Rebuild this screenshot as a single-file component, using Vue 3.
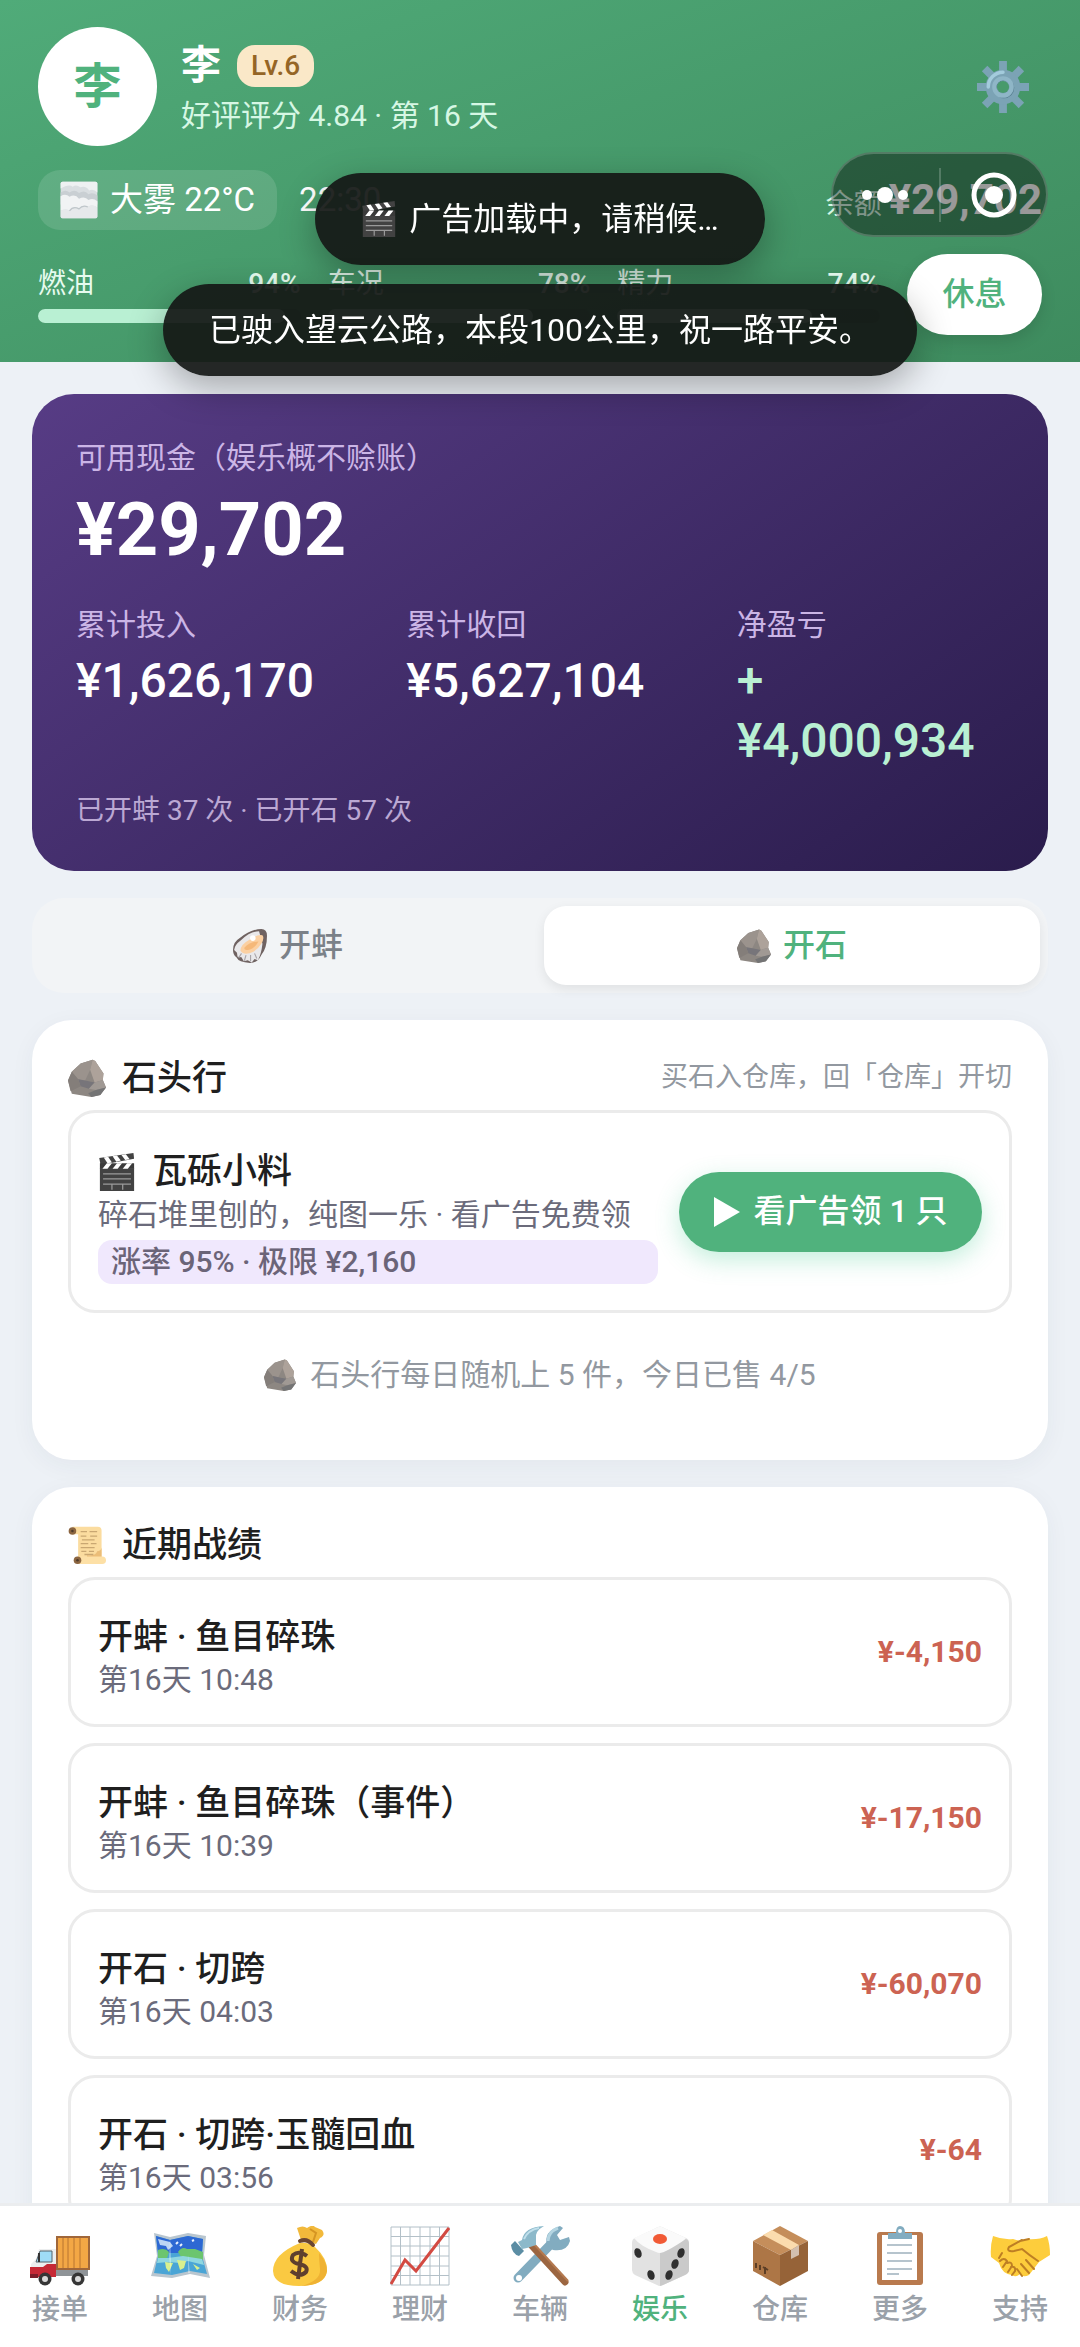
<template>
  <div class="app">
    <!-- icon sprite -->
    <svg class="sprite" aria-hidden="true">
      <symbol id="fog" viewBox="0 0 60 60">
        <rect x="1" y="1" width="58" height="58" rx="3" fill="#d9dee1" />
        <path d="M1 4q0-3 3-3h52q3 0 3 3v14q-6-6-13-3-5-8-14-5-6-5-12-1-6-5-19 3z" fill="#eef1f2" />
        <path d="M1 18q8-5 14 0 8-6 15 1 9-6 15 2 7-4 14 2v14H1z" fill="#c9cfd3" />
        <path d="M1 24q8-5 14 1 9-5 15 3 9-5 15 2 7-4 14 2v10q-8-6-15-1-9-4-14 3-9-5-15 3-6-4-14 0z" fill="#f1f3f4" />
        <path d="M1 47q8-4 14 0 6-8 15-3 6-7 14-3 8-5 15 1v14q0 3-3 3H4q-3 0-3-3z" fill="#e6e9eb" />
        <path d="M15 47q6-8 15-3 6-7 14-3" fill="none" stroke="#bfc6ca" stroke-width="2" />
      </symbol>
      <symbol id="clapper" viewBox="0 0 60 60">
        <rect x="3" y="24" width="54" height="36" fill="#424242" />
        <path d="M2 8 56 0l1 9L4 19z" fill="#424242" />
        <path d="m9 7 7-1 6 9-7 1zM23 5l7-1 6 8-7 2zM37 3l7-1 6 8-7 1z" fill="#fff" />
        <path d="M3 16h54v9H3z" fill="#3a3a3a" />
        <path d="m14 16-7 9h8l7-9zm16 0-7 9h8l7-9zm16 0-7 9h8l7-9z" fill="#fff" />
        <path d="M8 33h44M8 41h44M8 49h44M22 49v9M39 49v9" stroke="#9a9a9a" stroke-width="2" />
      </symbol>
      <symbol id="gear" viewBox="0 0 60 60">
        <g fill="#7ba3b5">
          <path d="M25.5 0h9v60h-9z" />
          <path d="M25.5 0h9v60h-9z" transform="rotate(45 30 30)" />
          <path d="M25.5 0h9v60h-9z" transform="rotate(90 30 30)" />
          <path d="M25.5 0h9v60h-9z" transform="rotate(135 30 30)" />
          <circle cx="30" cy="30" r="20" />
        </g>
        <path d="M13 30a17 17 0 0 1 17-17" fill="none" stroke="#a3cbdc" stroke-width="4" stroke-linecap="round" />
        <circle cx="31" cy="31" r="10" fill="none" stroke="#547b8c" stroke-width="4" />
        <circle cx="30" cy="30" r="10" fill="none" stroke="#8fb6c7" stroke-width="5" />
        <circle cx="30" cy="30" r="7" fill="#489a6b" />
      </symbol>
      <symbol id="oyster" viewBox="0 0 60 60">
        <path d="M0 37Q0 23 12 16 32 0 50 0q10 0 10 12 0 22-10 34-6 14-20 14-20-1-24-10-6-4-6-13z" fill="#6f6261" />
        <path d="M2 37q1-9 12-17Q30 4 46 4l6 22q-2 18-8 29l-6-2-5 6-7-4-7 2-4-7-7-1-1-7z" fill="#e9e8ea" />
        <path d="M13 38Q14 27 29 19 43 9 52 11q4 5-2 15-8 13-21 17-11 3-16-5z" fill="#fbd0a2" />
        <path d="M20 33q10-11 25-11-7 13-19 15-7 1-6-4z" fill="#f5b879" />
        <circle cx="35" cy="16" r="5" fill="#fff" />
        <path d="m15 43-5 8m13-5-3 10m11-10 0 11m7-14 4 9" stroke="#a9a5a9" stroke-width="2" fill="none" />
      </symbol>
      <symbol id="rock" viewBox="0 0 60 60">
        <path d="m39 1 4 2 13 20-1 10 5 12-9 12-14 3-31-5-6-21 6-14L20 7z" fill="#8d8782" />
        <path d="M39 1 20 7 6 20l10 12 11 2 8-17z" fill="#9b938d" />
        <path d="m39 1 4 2 13 20-1 10-13 4-7-20z" fill="#ada29a" />
        <path d="m16 32 11 2 15 3-9 10-13-4z" fill="#77757a" />
        <path d="M42 37l13-4 5 12-16 4-11-2z" fill="#a09994" />
        <path d="m44 49 16-4-9 12-14 3-5-6z" fill="#747475" />
        <path d="M0 34 6 20l10 12 4 11-16 8z" fill="#847e7a" />
      </symbol>
      <symbol id="scroll" viewBox="0 0 60 60">
        <path d="M7 1h40q6 0 6 6v42H16V13H7z" fill="#fbdc9f" />
        <path d="M46 40q6 0 7-6v16H30v-4q14 2 16-6z" fill="#ebbd78" />
        <rect x="12" y="48" width="48" height="12" rx="6" fill="#fde0a6" />
        <circle cx="7" cy="8" r="6" fill="#8b6540" />
        <circle cx="7" cy="8" r="2" fill="#4d3a2a" />
        <circle cx="15" cy="54" r="6" fill="#8b6540" />
        <circle cx="15" cy="54" r="2" fill="#4d3a2a" />
        <path d="M20 9h10m4 0h12M20 16h9m6 0h11M22 22h20M20 28h12m4 0h9M20 34h22M21 40h8m4 0h8M26 45h14" stroke="#c9a772" stroke-width="2" />
      </symbol>
      <symbol id="truck" viewBox="0 0 60 60">
        <path d="M24 44h34v6H24z" fill="#8f9498" />
        <rect x="27" y="11" width="32" height="32" fill="#f3a745" stroke="#a0673a" stroke-width="2" />
        <path d="M33 12v30M38 12v30M44 12v30M50 12v30" stroke="#b87430" stroke-width="1" />
        <path d="M9 23h17v20H1v-5l5-5z" fill="#eceeef" />
        <path d="M10 25h12v11H6z" fill="#9fdcf7" stroke="#55636b" stroke-width="1" />
        <path d="M9 27v9" stroke="#333" stroke-width="2" />
        <path d="M0 41h13l4-3h9v13H1q-1 0-1-1z" fill="#c62936" />
        <path d="M0 48h8v4H0z" fill="#7c1d29" />
        <circle cx="15" cy="53" r="6.5" fill="#363636" />
        <circle cx="15" cy="53" r="3" fill="#dadada" />
        <circle cx="48" cy="53" r="6.5" fill="#363636" />
        <circle cx="48" cy="53" r="3" fill="#dadada" />
      </symbol>
      <symbol id="map" viewBox="0 0 60 60">
        <path d="m4 7 16 4L38 7l18 3-2 19 6 23-20-4-18 4-21-2 6-20z" fill="#b9c6cf" />
        <path d="m6 10 14 4 18-4 15 3-1 17 5 18-17-3-18 4-18-2 4-17z" fill="#4aa5d6" />
        <path d="m6 10 14 4 18-4 15 3-1 14H8z" fill="#2d68d3" />
        <path d="m8 13 12 3 3 4-5 4-2-4-6-1z" fill="#bcd5f4" />
        <path d="M8 24q7-3 11 2l-2 6H8zM28 26q4-6 9-3l8 0 8 3v8l-12-1-8 1z" fill="#6cc56f" />
        <path d="M8 32h10l15-2 19 3 2 6-8-2-8-2-8 2-12-1-11 1z" fill="#8fd7e0" />
        <path d="m15 36 8 1-4 9-3-4zM27 34l9 1-2 7-4 2zM43 38l7 4-3 2z" fill="#d8f08e" />
        <path d="m20 11-1 20 2 18V32zM38 9v20l2 18h-2z" fill="#fff" opacity=".35" />
        <path d="m26 18 2-2m2 4 2-2m10-3 2-1" stroke="#e8f1ff" stroke-width="2" />
      </symbol>
      <symbol id="money" viewBox="0 0 60 60">
        <path d="m31 14-4-12q6-3 10 0 6-4 8-1l7 3q4 5-2 8l-4 6z" fill="#f2b93b" />
        <path d="m40 3 6 4-3 9" fill="none" stroke="#d59522" stroke-width="2" />
        <path d="M30 17q8-1 15 4 13 12 12 24-2 15-28 15-25 0-26-15 0-17 27-28z" fill="#fac942" />
        <path d="M49 27q8 9 8 18-2 14-26 15 20-5 19-17-1-8-1-16z" fill="#efb233" />
        <path d="M30 15q7-3 13 4" stroke="#6b4632" stroke-width="4" fill="none" stroke-linecap="round" />
        <path d="M37 30q-8-6-14-1-4 7 6 9 10 2 7 8-6 6-15-1M32 23l-4 30" stroke="#5e3f2e" stroke-width="4" fill="none" />
      </symbol>
      <symbol id="chart" viewBox="0 0 60 60">
        <path d="M1 1h58v58H1zM10.5 1v58M20 1v58M30 1v58M40 1v58M49.5 1v58M1 10.5h58M1 20h58M1 30h58M1 40h58M1 49.5h58" fill="#fff" stroke="#b3c0c8" stroke-width="1" />
        <path d="m1 58 14-24 11 11L59 2" fill="none" stroke="#d34a42" stroke-width="3" />
      </symbol>
      <symbol id="tools" viewBox="0 0 60 60">
        <path d="m8 52 33-34" stroke="#82acc0" stroke-width="9" stroke-linecap="round" />
        <path d="M37 20Q33 5 50 0l3 2-6 7 3 5 9-3 1 4q-3 11-17 9z" fill="#82acc0" />
        <path d="M38 15q0-9 10-13" fill="none" stroke="#b4d5e2" stroke-width="3" />
        <circle cx="9" cy="52" r="3" fill="#fff" />
        <path d="m22 20 33 36" stroke="#9c6641" stroke-width="7" stroke-linecap="round" />
        <path d="m24 18 34 37" stroke="#b57a50" stroke-width="2" />
        <path d="m1 19 4-4 9 10-5 5q-7-2-8-11z" fill="#5b8da4" />
        <path d="m8 16 4-2q2-13 22-14-9 5-8 12v7l-9 3-5 1z" fill="#8cb9ca" />
        <path d="m14 13q4-9 15-11" stroke="#c0dfeb" stroke-width="2" fill="none" />
      </symbol>
      <symbol id="dice" viewBox="0 0 60 60">
        <path d="M26 2q4-3 8 0l22 10q3 1 3 5v27q0 3-4 5L33 59q-3 2-6 0L5 49q-3-2-3-5V17q0-4 3-5z" fill="#e2e2e2" />
        <path d="M26 2q4-3 8 0l22 10q-6 8-22 14-4 2-8 0Q10 20 4 12z" fill="#fafafa" />
        <path d="M30 27q5 0 26-14 3 1 3 5v26q0 3-4 5L33 59l-3 1z" fill="#cacaca" />
        <ellipse cx="30" cy="13" rx="7" ry="5" fill="#f15a35" />
        <g fill="#2f2f2f">
          <ellipse cx="8" cy="27" rx="3.5" ry="5" transform="rotate(-20 8 27)" />
          <ellipse cx="21" cy="49" rx="3.5" ry="5" transform="rotate(-20 21 49)" />
          <ellipse cx="51" cy="27" rx="3.5" ry="5" transform="rotate(20 51 27)" />
          <ellipse cx="45" cy="38" rx="3.5" ry="5" transform="rotate(20 45 38)" />
          <ellipse cx="39" cy="49" rx="3.5" ry="5" transform="rotate(20 39 49)" />
        </g>
      </symbol>
      <symbol id="box" viewBox="0 0 60 60">
        <path d="M30 0 58 15 30 29 3 15z" fill="#c58e5b" />
        <path d="m3 15 27 14v31L3 45z" fill="#ad7646" />
        <path d="M58 15 30 29v31l28-15z" fill="#966338" />
        <path d="m13 9 9-5 27 15-8 5z" fill="#fbdcae" />
        <path d="m41 24 8-5v10l-8 4z" fill="#d3bfae" />
        <path d="m6 37 0 5m4-3 0 5m3-3 5 3m-3-3v7" stroke="#5d3f26" stroke-width="2" />
      </symbol>
      <symbol id="clipboard" viewBox="0 0 60 60">
        <rect x="7" y="6" width="46" height="53" rx="3" fill="#b97a4e" />
        <path d="M12 9h35v45H12z" fill="#fff" />
        <path d="M17 19h25M17 27h25M17 35h25M17 43h25M17 48h12" stroke="#9fb1bd" stroke-width="1.5" />
        <path d="M18 7h8q0-7 4-7 5 0 5 7h7v6H18z" fill="#82acc0" />
        <circle cx="30" cy="5" r="2" fill="#fff" />
      </symbol>
      <symbol id="handshake" viewBox="0 0 60 60">
        <path d="M3 10q10 4 20 3l7 2 7-2q12 1 20-3 3 8 3 19l-11 7-10 13q-6 3-9-1-4 4-8 1-10-1-13-12L1 31Q0 20 3 10z" fill="#fdcd3c" />
        <path d="M32 14 19 21q-3 5 5 4l8-2q7 6 16 12m-21 8 5 7m-1-12 8 9m-3-13 8 9M10 35q4-4 7 0l-4 6m4-4q5-2 5 3l-4 6m3-5q5-1 4 4l-3 4M30 15l9-2m-30 19 3-5" fill="none" stroke="#bd7e24" stroke-width="2" stroke-linecap="round" />
      </symbol>
    </svg>

    <header class="top">
      <div class="profile">
        <div class="avatar">李</div>
        <div class="who">
          <div class="who-name">
            <strong>李</strong>
            <span class="level">Lv.6</span>
          </div>
          <div class="who-sub">好评评分 4.84 · 第 16 天</div>
        </div>
        <button class="settings" type="button" aria-label="设置">
          <svg><use href="#gear" /></svg>
        </button>
      </div>

      <div class="status">
        <span class="weather"><svg><use href="#fog" /></svg>大雾 22°C</span>
        <span class="clock">22:30</span>
        <span class="balance">余额 <b>¥29,702</b></span>
      </div>

      <div class="vitals">
        <div v-for="v in vitals" :key="v.label" class="vital">
          <div class="vital-head"><span>{{ v.label }}</span><b>{{ v.value }}%</b></div>
          <div class="bar"><div class="bar-fill" :style="{ width: v.value + '%' }"></div></div>
        </div>
        <button class="rest" type="button">休息</button>
      </div>
    </header>

    <main class="content">
      <section class="wallet">
        <div class="wallet-label">可用现金（娱乐概不赊账）</div>
        <div class="wallet-cash">¥29,702</div>
        <div class="wallet-stats">
          <div>
            <div class="wallet-label">累计投入</div>
            <div class="wallet-num">¥1,626,170</div>
          </div>
          <div>
            <div class="wallet-label">累计收回</div>
            <div class="wallet-num">¥5,627,104</div>
          </div>
          <div>
            <div class="wallet-label">净盈亏</div>
            <div class="wallet-num gain">+<br>¥4,000,934</div>
          </div>
        </div>
        <div class="wallet-foot">已开蚌 37 次 · 已开石 57 次</div>
      </section>

      <div class="tabs">
        <button
          v-for="t in tabs"
          :key="t.key"
          type="button"
          class="tab"
          :class="{ active: tab === t.key }"
          @click="tab = t.key"
        >
          <svg><use :href="'#' + t.icon" /></svg>{{ t.label }}
        </button>
      </div>

      <section class="card">
        <div class="card-head">
          <h2><svg><use href="#rock" /></svg>石头行</h2>
          <span class="hint">买石入仓库，回「仓库」开切</span>
        </div>
        <div class="item offer">
          <div class="item-main">
            <div class="item-title"><svg><use href="#clapper" /></svg>瓦砾小料</div>
            <div class="item-sub">碎石堆里刨的，纯图一乐 · 看广告免费领</div>
            <div class="odds">涨率 95% · 极限 ¥2,160</div>
          </div>
          <button class="watch" type="button">
            <svg viewBox="0 0 28 30"><path d="M1 0v30l26-15z" fill="#fff" /></svg>看广告领 1 只
          </button>
        </div>
        <div class="empty"><svg><use href="#rock" /></svg>石头行每日随机上 5 件，今日已售 4/5</div>
      </section>

      <section class="card">
        <div class="card-head">
          <h2><svg><use href="#scroll" /></svg>近期战绩</h2>
        </div>
        <div v-for="r in records" :key="r.time" class="item record">
          <div class="item-main">
            <div class="item-title">{{ r.title }}</div>
            <div class="item-sub">{{ r.time }}</div>
          </div>
          <div class="amount">{{ r.amount }}</div>
        </div>
      </section>
    </main>

    <nav class="nav">
      <a v-for="n in nav" :key="n.icon" href="#" :class="{ active: n.icon === 'dice' }" @click.prevent>
        <svg><use :href="'#' + n.icon" /></svg>
        <span>{{ n.label }}</span>
      </a>
    </nav>

    <div class="toasts">
      <div class="toast"><svg><use href="#clapper" /></svg>广告加载中，请稍候…</div>
      <div class="toast">已驶入望云公路，本段100公里，祝一路平安。</div>
    </div>

    <div class="capsule">
      <button type="button" aria-label="菜单">
        <svg viewBox="0 0 48 48" fill="#fff">
          <circle cx="6" cy="24" r="5" />
          <circle cx="24" cy="24" r="8" />
          <circle cx="42" cy="24" r="5" />
        </svg>
      </button>
      <i></i>
      <button type="button" aria-label="关闭">
        <svg viewBox="0 0 48 48">
          <circle cx="24" cy="24" r="20" fill="none" stroke="#fff" stroke-width="5" />
          <circle cx="24" cy="24" r="9" fill="#fff" />
        </svg>
      </button>
    </div>
  </div>
</template>

<script setup>
import { ref } from 'vue'

const tab = ref('stone')

const vitals = [
  { label: '燃油', value: 94 },
  { label: '车况', value: 78 },
  { label: '精力', value: 74 },
]

const tabs = [
  { key: 'clam', icon: 'oyster', label: '开蚌' },
  { key: 'stone', icon: 'rock', label: '开石' },
]

const records = [
  { title: '开蚌 · 鱼目碎珠', time: '第16天 10:48', amount: '¥-4,150' },
  { title: '开蚌 · 鱼目碎珠（事件）', time: '第16天 10:39', amount: '¥-17,150' },
  { title: '开石 · 切跨', time: '第16天 04:03', amount: '¥-60,070' },
  { title: '开石 · 切跨·玉髓回血', time: '第16天 03:56', amount: '¥-64' },
]

const nav = [
  { icon: 'truck', label: '接单' },
  { icon: 'map', label: '地图' },
  { icon: 'money', label: '财务' },
  { icon: 'chart', label: '理财' },
  { icon: 'tools', label: '车辆' },
  { icon: 'dice', label: '娱乐' },
  { icon: 'box', label: '仓库' },
  { icon: 'clipboard', label: '更多' },
  { icon: 'handshake', label: '支持' },
]
</script>

<style>
body {
  background: #edf1f6;
}
</style>

<style scoped>
.app {
  display: flex;
  flex-direction: column;
  height: 100vh;
  background: #edf1f6;
  color: #1f1f1f;
  font-family: Roboto, 'Noto Sans CJK SC', sans-serif;
  font-size: 30px;
  line-height: 1.4;
}

.app * {
  box-sizing: border-box;
}

.sprite {
  position: absolute;
  width: 0;
  height: 0;
}

svg {
  flex: none;
}

button {
  border: 0;
  padding: 0;
  background: none;
  font: inherit;
  color: inherit;
}

/* Header */
.top {
  flex: none;
  display: flex;
  flex-direction: column;
  gap: 24px;
  padding: 27px 38px;
  background: linear-gradient(160deg, #50ab79, #3e8b5e);
  color: #fff;
}

.profile {
  display: flex;
  align-items: center;
  height: 119px;
}

.avatar {
  width: 119px;
  height: 119px;
  border-radius: 50%;
  background: #fff;
  color: #50b27d;
  font-size: 48px;
  font-weight: 700;
  line-height: 119px;
  text-align: center;
}

.who {
  flex: 1;
  margin-left: 24px;
  padding-top: 8px;
}

.who-name {
  display: flex;
  align-items: center;
  gap: 16px;
  height: 42px;
}

.who-name strong {
  font-size: 40px;
  line-height: 42px;
}

.level {
  padding: 0 14px;
  border-radius: 18px;
  background: #fae8c8;
  color: #956525;
  font-size: 28px;
  font-weight: 500;
  line-height: 42px;
}

.who-sub {
  margin-top: 8px;
  color: #d6f7e4;
  line-height: 42px;
}

.settings {
  width: 78px;
  height: 52px;
}

.settings svg {
  width: 52px;
  height: 52px;
}

.status {
  display: flex;
  align-items: center;
  height: 60px;
  font-size: 33px;
}

.weather {
  display: flex;
  align-items: center;
  gap: 12px;
  height: 60px;
  padding: 0 22px;
  border-radius: 22px;
  background: rgba(255, 255, 255, 0.12);
}

.weather svg {
  width: 38px;
  height: 38px;
}

.clock {
  margin-left: 22px;
}

.balance {
  margin-left: auto;
  color: #d6f7e4;
  font-size: 28px;
}

.balance b {
  color: #fff;
  font-size: 42px;
}

.vitals {
  display: grid;
  grid-template-columns: 1fr 1fr 1fr 135px;
  column-gap: 27px;
  align-items: center;
}

.vital-head {
  display: flex;
  justify-content: space-between;
  margin-bottom: 8px;
  color: #e6fbef;
  font-size: 28px;
  line-height: 34px;
}

.vital-head b {
  font-weight: 500;
}

.bar {
  height: 14px;
  border-radius: 7px;
  background: rgba(0, 0, 0, 0.18);
}

.bar-fill {
  height: 14px;
  border-radius: 7px;
  background: #b9f0d3;
}

.rest {
  height: 81px;
  border-radius: 41px;
  background: #fff;
  box-shadow: 0 6px 16px rgba(0, 0, 0, 0.12);
  color: #50b27d;
  font-size: 32px;
  font-weight: 500;
}

/* Body */
.content {
  flex: 1;
  min-height: 0;
  overflow-y: auto;
  scrollbar-width: none;
  padding: 32px 32px 27px;
}

.wallet {
  padding: 44px 44px 40px;
  border-radius: 42px;
  background: linear-gradient(145deg, #573c85, #2a1c4c);
  color: #fff;
}

.wallet-label {
  color: #cbb5e6;
  line-height: 40px;
}

.wallet-cash {
  font-size: 74px;
  font-weight: 700;
  line-height: 103px;
}

.wallet-stats {
  display: grid;
  grid-template-columns: repeat(3, 1fr);
  column-gap: 63px;
  margin-top: 24px;
}

.wallet-num {
  margin-top: 6px;
  font-size: 48px;
  font-weight: 500;
  line-height: 60px;
}

.wallet-num.gain {
  color: #b9f0d3;
}

.wallet-num + .wallet-num {
  margin-top: 0;
}

.wallet-foot {
  margin-top: 20px;
  color: #bba8d3;
  font-size: 28px;
  line-height: 40px;
}

.tabs {
  display: flex;
  gap: 8px;
  margin: 27px 0;
  padding: 8px;
  border-radius: 32px;
  background: #f2f4f6;
}

.tab {
  flex: 1;
  display: flex;
  align-items: center;
  justify-content: center;
  gap: 12px;
  height: 79px;
  border-radius: 22px;
  color: #7b8188;
  font-size: 32px;
  font-weight: 500;
}

.tab.active {
  background: #fff;
  box-shadow: 0 4px 12px rgba(0, 0, 0, 0.08);
  color: #50b27d;
}

.tab svg {
  width: 34px;
  height: 34px;
}

.card {
  margin-bottom: 27px;
  padding: 26px 36px 36px;
  border-radius: 40px;
  background: #fff;
  box-shadow: 0 6px 24px rgba(30, 50, 70, 0.05);
}

.card-head {
  display: flex;
  align-items: center;
  justify-content: space-between;
  height: 64px;
}

h2 {
  display: flex;
  align-items: center;
  gap: 16px;
  margin: 0;
  font-size: 35px;
  font-weight: 500;
}

h2 svg {
  width: 38px;
  height: 38px;
}

.hint {
  color: #9298a0;
  font-size: 27px;
}

.item {
  display: flex;
  align-items: center;
  gap: 21px;
  padding: 8px 27px 0;
  border: 3px solid #ebebeb;
  border-radius: 27px;
}

.item-main {
  flex: 1;
}

.item-title {
  display: flex;
  align-items: center;
  height: 48px;
  font-size: 35px;
  font-weight: 500;
}

.item-title svg {
  width: 38px;
  height: 38px;
  margin-right: 16px;
}

.item-sub {
  color: #6b6b7b;
  line-height: 38px;
}

.offer {
  height: 203px;
}

.odds {
  height: 44px;
  margin-top: 6px;
  padding: 0 13px;
  border-radius: 14px;
  background: #f0e8fd;
  color: #6b6478;
  font-weight: 500;
  line-height: 44px;
}

.watch {
  display: flex;
  align-items: center;
  justify-content: center;
  gap: 12px;
  width: 303px;
  height: 80px;
  margin-bottom: 8px;
  border-radius: 40px;
  background: #50b27d;
  box-shadow: 0 8px 24px rgba(60, 200, 140, 0.3);
  color: #fff;
  font-size: 32px;
  font-weight: 500;
}

.watch svg {
  width: 28px;
  height: 30px;
}

.empty {
  display: flex;
  align-items: center;
  justify-content: center;
  gap: 14px;
  height: 84px;
  margin: 20px 0 7px;
  color: #9298a0;
}

.empty svg {
  width: 32px;
  height: 32px;
}

.record {
  height: 150px;
}

.record + .record {
  margin-top: 16px;
}

.amount {
  margin-bottom: 8px;
  color: #cc6352;
  font-weight: 700;
}

/* Bottom navigation */
.nav {
  flex: none;
  display: grid;
  grid-template-columns: repeat(9, 1fr);
  height: 144px;
  padding-top: 20px;
  border-top: 3px solid #ebedef;
  background: #fff;
}

.nav a {
  display: flex;
  flex-direction: column;
  align-items: center;
  gap: 4px;
  color: #9aa1a9;
  font-size: 28px;
  font-weight: 500;
  line-height: 40px;
  text-decoration: none;
}

.nav a.active {
  color: #50b27d;
}

.nav svg {
  width: 60px;
  height: 60px;
}

/* Overlays */
.toasts {
  position: fixed;
  top: 173px;
  left: 0;
  right: 0;
  display: flex;
  flex-direction: column;
  align-items: center;
  gap: 19px;
  pointer-events: none;
}

.toast {
  display: flex;
  align-items: center;
  height: 92px;
  padding: 0 46px;
  border-radius: 46px;
  background: rgba(20, 24, 22, 0.93);
  box-shadow: 0 12px 36px rgba(0, 0, 0, 0.3);
  color: #fff;
  font-size: 32px;
  white-space: nowrap;
}

.toast svg {
  width: 36px;
  height: 36px;
  margin-right: 12px;
}

.capsule {
  position: fixed;
  top: 152px;
  right: 32px;
  display: flex;
  align-items: center;
  justify-content: space-between;
  width: 217px;
  height: 85px;
  padding: 0 28px;
  border: 2px solid rgba(255, 255, 255, 0.2);
  border-radius: 43px;
  background: rgba(0, 0, 0, 0.4);
}

.capsule button {
  display: flex;
}

.capsule svg {
  width: 48px;
  height: 48px;
}

.capsule i {
  width: 2px;
  height: 54px;
  background: rgba(255, 255, 255, 0.2);
}
</style>
